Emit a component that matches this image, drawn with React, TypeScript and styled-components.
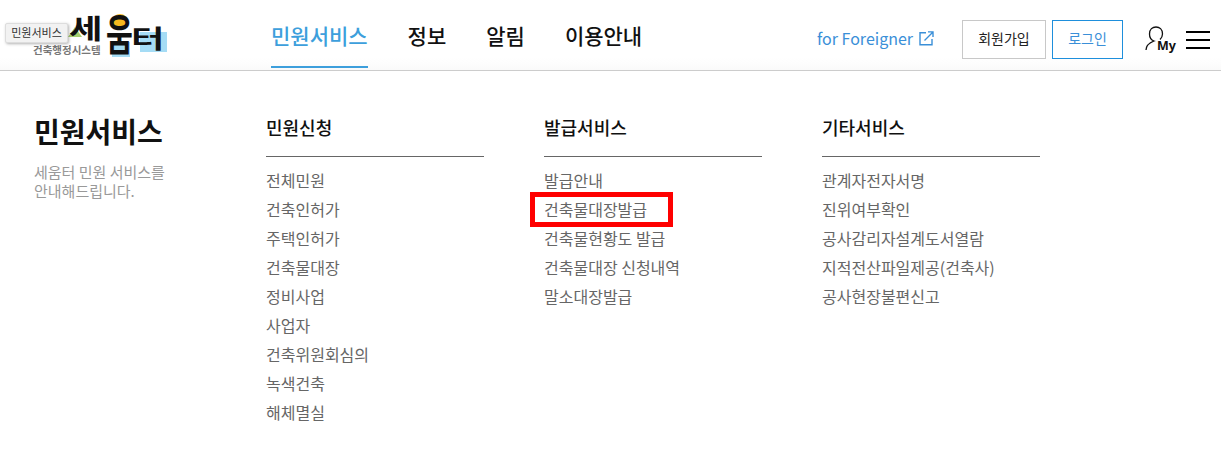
import React from 'react';
import styled, { createGlobalStyle } from 'styled-components';

const GlobalStyle = createGlobalStyle`
  html, body { margin: 0; padding: 0; background: #fff; }
  body { font-family: "Noto Sans CJK KR", "Noto Sans", sans-serif; }
  a { text-decoration: none; color: inherit; }
  ul { list-style: none; margin: 0; padding: 0; }
`;

const Page = styled.div`
  width: 1221px;
  height: 467px;
  overflow: hidden;
  position: relative;
`;

const Header = styled.header`
  height: 70px;
  border-bottom: 1px solid #ccc;
  display: flex;
  align-items: stretch;
  background: linear-gradient(#fff 58px, #fafafa);
`;

const LogoBox = styled.a`
  position: relative;
  width: 271px;
  flex: none;
`;

const LogoArt = styled.svg`
  position: absolute;
  left: 66px;
  top: 4px;
  overflow: visible;
  text {
    font-family: "Noto Sans CJK KR", sans-serif;
    font-weight: 700;
    fill: #111;
  }
`;

const LogoSub = styled.span`
  position: absolute;
  left: 33px;
  top: 42px;
  font-size: 10.5px;
  line-height: 15px;
  font-weight: 700;
  color: #777;
  white-space: nowrap;
`;

const Tooltip = styled.span`
  position: absolute;
  left: 5px;
  top: 23px;
  width: 63px;
  height: 20px;
  box-sizing: border-box;
  background: #f2f2f2;
  border: 1px solid #ddd;
  border-radius: 2px;
  box-shadow: 1px 1px 3px rgba(0, 0, 0, 0.3);
  font-size: 11px;
  line-height: 17px;
  text-align: center;
  color: #333;
  white-space: nowrap;
`;

const Gnb = styled.nav`
  display: flex;
  gap: 40px;
  flex: 1;
`;

const GnbItem = styled.a<{ $active?: boolean }>`
  height: 66px;
  font-size: 21px;
  font-weight: 500;
  line-height: 71px;
  color: ${p => (p.$active ? '#3d9fdc' : '#111')};
  border-bottom: 2px solid ${p => (p.$active ? '#3d9fdc' : 'transparent')};
`;

const Utils = styled.div`
  display: flex;
  align-items: center;
  padding: 9px 11px 0 0;
`;

const Foreigner = styled.a`
  display: flex;
  align-items: center;
  gap: 6px;
  font-size: 16px;
  line-height: 20px;
  color: #3a8fd8;
  margin: -3px 28px 0 0;
`;

const AuthButton = styled.a<{ $primary?: boolean }>`
  width: ${p => (p.$primary ? 71 : 84)}px;
  height: 39px;
  box-sizing: border-box;
  margin-right: 6px;
  border: 1px solid ${p => (p.$primary ? '#1e8fdc' : '#c8c8c8')};
  color: ${p => (p.$primary ? '#3a8fd8' : '#222')};
  font-size: 14px;
  line-height: 35px;
  text-align: center;
`;

const MyLink = styled.a`
  display: flex;
  margin-left: 16px;
  margin-right: 7px;
`;

const Burger = styled.button`
  width: 24px;
  height: 18px;
  padding: 0;
  border: none;
  background: none;
  display: flex;
  flex-direction: column;
  justify-content: space-between;
  span { display: block; height: 2px; background: #000; }
`;

const Body = styled.main`
  display: flex;
  padding: 42px 0 0 34px;
`;

const Intro = styled.div`
  width: 232px;
  flex: none;
`;

const IntroTitle = styled.h2`
  margin: 0 0 13px;
  font-size: 28px;
  line-height: 36px;
  font-weight: 700;
  color: #111;
`;

const IntroText = styled.p`
  margin: 0;
  font-size: 15px;
  line-height: 19px;
  color: #999;
`;

const Columns = styled.div`
  display: flex;
  gap: 60px;
`;

const Column = styled.section`
  width: 218px;
`;

const ColumnTitle = styled.h3`
  margin: 0 0 9px;
  height: 40px;
  padding-top: 3px;
  border-bottom: 1px solid #666;
  font-size: 18px;
  line-height: 22px;
  font-weight: 500;
  color: #111;
`;

const MenuItem = styled.li`
  position: relative;
  height: 29px;
  font-size: 16px;
  line-height: 29px;
  color: #666;
  white-space: nowrap;
`;

const Highlight = styled.span`
  position: absolute;
  left: -14px;
  top: -3px;
  width: 143px;
  height: 35px;
  box-sizing: border-box;
  border: 5px solid #f00;
`;

const columns = [
  { title: '민원신청', items: ['전체민원', '건축인허가', '주택인허가', '건축물대장', '정비사업', '사업자', '건축위원회심의', '녹색건축', '해체멸실'] },
  { title: '발급서비스', items: ['발급안내', '건축물대장발급', '건축물현황도 발급', '건축물대장 신청내역', '말소대장발급'] },
  { title: '기타서비스', items: ['관계자전자서명', '진위여부확인', '공사감리자설계도서열람', '지적전산파일제공(건축사)', '공사현장불편신고'] },
];

export default function App() {
  return (
    <Page>
      <GlobalStyle />
      <Header>
        <LogoBox href="#">
          <LogoArt width="104" height="56" viewBox="0 -6 104 56">
            <path d="M2 27 L9 17 L16 27 Z" fill="#a6cf6f" />
            <circle cx="54" cy="12" r="8" fill="#f7b91e" />
            <rect x="46" y="32" width="18" height="15" fill="#a5dcf5" />
            <rect x="74" y="22" width="27" height="20" fill="#a5dcf5" />
            <text transform="translate(3 29) scale(1.35 1)" fontSize="27">세</text>
            <text transform="translate(40 41) scale(0.68 1)" fontSize="43">움</text>
            <text transform="translate(65 38) scale(1.45 1)" fontSize="25">터</text>
          </LogoArt>
          <LogoSub>건축행정시스템</LogoSub>
          <Tooltip>민원서비스</Tooltip>
        </LogoBox>
        <Gnb>
          <GnbItem href="#" $active>민원서비스</GnbItem>
          <GnbItem href="#">정보</GnbItem>
          <GnbItem href="#">알림</GnbItem>
          <GnbItem href="#">이용안내</GnbItem>
        </Gnb>
        <Utils>
          <Foreigner href="#">
            for Foreigner
            <svg width="15" height="15" viewBox="0 0 15 15" fill="none" stroke="#3a8fd8" strokeWidth="1.4">
              <path d="M7 1.700H1v12h12V8" />
              <path d="M5.500 9.500 14 1M9 .9h5v5" />
            </svg>
          </Foreigner>
          <AuthButton href="#">회원가입</AuthButton>
          <AuthButton href="#" $primary>로그인</AuthButton>
          <MyLink href="#">
            <svg width="34" height="30" viewBox="0 0 34 30">
              <path d="M1 25c0-4 3-7 8-9-3-1-4.500-4-4.500-7C4.500 4.500 7.500 2 11 2s6.500 2.500 6.500 7c0 2-1 4-2.500 5.500" fill="none" stroke="#111" strokeWidth="1.3" />
              <text x="12" y="25" fontSize="12.500" fontWeight="700" fill="#111" fontFamily="Noto Sans, sans-serif">My</text>
            </svg>
          </MyLink>
          <Burger aria-label="menu"><span /><span /><span /></Burger>
        </Utils>
      </Header>
      <Body>
        <Intro>
          <IntroTitle>민원서비스</IntroTitle>
          <IntroText>세움터 민원 서비스를<br />안내해드립니다.</IntroText>
        </Intro>
        <Columns>
          {columns.map(col => (
            <Column key={col.title}>
              <ColumnTitle>{col.title}</ColumnTitle>
              <ul>
                {col.items.map(item => (
                  <MenuItem key={item}>
                    {item}
                    {item === '건축물대장발급' && <Highlight />}
                  </MenuItem>
                ))}
              </ul>
            </Column>
          ))}
        </Columns>
      </Body>
    </Page>
  );
}
